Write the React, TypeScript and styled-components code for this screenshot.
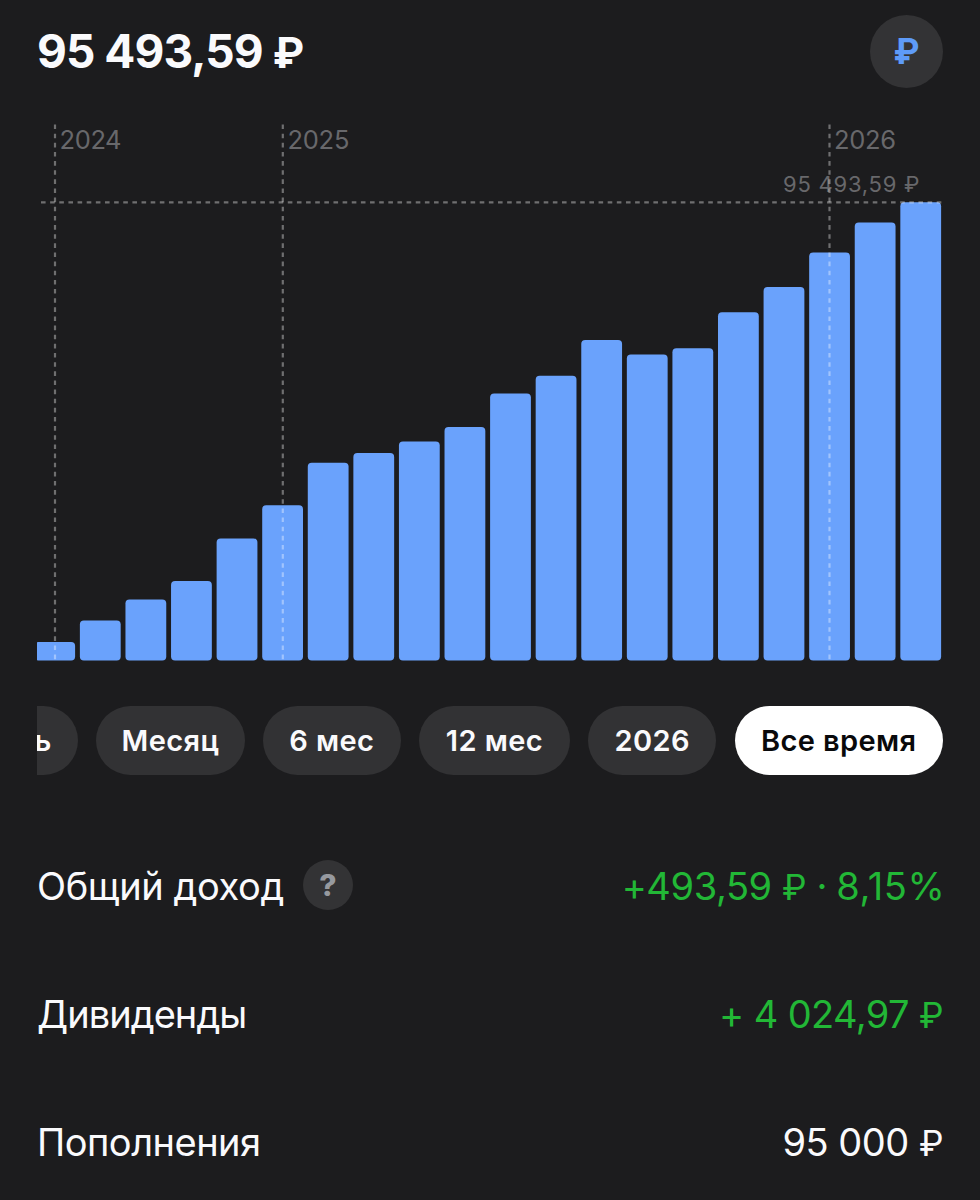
import React from 'react';
import styled, { createGlobalStyle } from 'styled-components';

const GlobalStyle = createGlobalStyle`
  * { box-sizing: border-box; }
  body { margin: 0; background: #1c1c1e; }
`;

const Screen = styled.main`
  display: flex;
  flex-direction: column;
  width: 980px;
  height: 1200px;
  padding: 14px 37px 0;
  overflow: hidden;
  background: #1c1c1e;
  color: #fafafc;
  font-family: Inter, 'Liberation Sans', sans-serif;
`;

const Header = styled.header`
  display: flex;
  flex: none;
  align-items: center;
  justify-content: space-between;
  height: 75px;
`;

const Balance = styled.h1`
  margin: 0;
  font-size: 46px;
  line-height: 57px;
  font-weight: 700;
  letter-spacing: -0.95px;
  white-space: nowrap;
`;

const Ruble = styled.span`
  font-size: 0.92em;
  line-height: 1;
`;

const Percent = styled.span`
  margin: 0 -2.5px 0 -1px;
  letter-spacing: 0.6px;
`;

const CurrencyButton = styled.button`
  display: flex;
  align-items: center;
  justify-content: center;
  width: 73px;
  height: 73px;
  padding: 0 0 1px;
  border: 0;
  border-radius: 50%;
  background: #333335;
  color: #5e9bf8;
  font: 650 35px/44px Inter, sans-serif;
`;

const Chart = styled.svg`
  display: block;
  flex: none;
  width: 907px;
  height: 540px;
  margin-top: 33px;
  font-family: Inter, sans-serif;
`;

const Periods = styled.nav`
  display: flex;
  flex: none;
  justify-content: flex-end;
  gap: 18.2px;
  width: 906px;
  height: 69px;
  margin-top: 44px;
  overflow: hidden;
`;

const Period = styled.button<{ $width: number; $active?: boolean }>`
  display: flex;
  flex: none;
  align-items: center;
  justify-content: center;
  width: ${(p) => p.$width}px;
  height: 69px;
  padding: 0;
  border: 0;
  border-radius: 35px;
  background: ${(p) => (p.$active ? '#ffffff' : '#323234')};
  color: ${(p) => (p.$active ? '#09090b' : '#fafafc')};
  font: 600 29px/37px Inter, sans-serif;
  letter-spacing: 0.4px;
  white-space: nowrap;
`;

const Summary = styled.section`
  display: flex;
  flex: none;
  flex-direction: column;
  margin-top: 46px;
`;

const Row = styled.div`
  display: flex;
  align-items: center;
  justify-content: space-between;
  height: 128px;
  padding-top: 2px;
  font-size: 38px;
  line-height: 48px;
  white-space: nowrap;
`;

const Label = styled.div<{ $spacing: number }>`
  display: flex;
  align-items: center;
  gap: 19px;
  letter-spacing: ${(p) => p.$spacing}px;
`;

const Value = styled.div<{ $positive?: boolean; $spacing: number }>`
  color: ${(p) => (p.$positive ? '#22b736' : '#fafafc')};
  letter-spacing: ${(p) => p.$spacing}px;
`;

const Help = styled.button`
  display: flex;
  align-items: center;
  justify-content: center;
  width: 50px;
  height: 50px;
  margin-top: -2px;
  padding: 0;
  border: 0;
  border-radius: 50%;
  background: #333335;
  color: #96999f;
  font: 800 30px/36px Inter, sans-serif;
`;

const BAR_TOPS = [
  642, 620.5, 599.5, 581, 538.5, 505.2, 462.8, 453, 441.5, 427,
  393.5, 375.7, 340, 354.5, 348.2, 312.3, 287, 252.6, 222.5, 202.3,
];
const BAR_BOTTOM = 660.5;
const BAR_STEP = 45.58;

const YEARS = [
  { x: 55, label: '2024' },
  { x: 282.8, label: '2025' },
  { x: 829.5, label: '2026' },
];

const PERIODS = [
  { label: 'День', width: 130 },
  { label: 'Месяц', width: 149 },
  { label: '6 мес', width: 137.5 },
  { label: '12 мес', width: 151.3 },
  { label: '2026', width: 128 },
  { label: 'Все время', width: 208.5, active: true },
];

function BalanceChart() {
  return (
    <Chart viewBox="37 122 907 540">
      {BAR_TOPS.map((top, i) => (
        <rect
          key={i}
          x={34.3 + i * BAR_STEP}
          y={top}
          width={40.8}
          height={BAR_BOTTOM - top}
          rx={4}
          fill="#6aa2fc"
        />
      ))}
      {YEARS.map(({ x, label }) => (
        <text key={label} x={x + 4.6} y={148.6} fontSize={25.5} fill="#68686b" textLength={62}>
          {label}
        </text>
      ))}
      <text x={783} y={192.3} fontSize={22} fill="#68686b" textLength={136.5}>
        95 493,59 ₽
      </text>
      <g stroke="#fff" strokeOpacity={0.37} strokeWidth={2.2} strokeDasharray="4.6 4.54">
        <line x1={41} y1={202.3} x2={943} y2={202.3} />
        {YEARS.map(({ x }) => (
          <line key={x} x1={x} y1={124.5} x2={x} y2={660.5} />
        ))}
      </g>
    </Chart>
  );
}

export default function App() {
  return (
    <>
      <GlobalStyle />
      <Screen>
        <Header>
          <Balance>
            95 493,59 <Ruble>₽</Ruble>
          </Balance>
          <CurrencyButton>₽</CurrencyButton>
        </Header>
        <BalanceChart />
        <Periods>
          {PERIODS.map(({ label, width, active }) => (
            <Period key={label} $width={width} $active={active}>
              {label}
            </Period>
          ))}
        </Periods>
        <Summary>
          <Row>
            <Label $spacing={-0.4}>
              Общий доход
              <Help>?</Help>
            </Label>
            <Value $positive $spacing={-0.4}>
              +493,59 <Ruble>₽</Ruble> · <Percent>8,15%</Percent>
            </Value>
          </Row>
          <Row>
            <Label $spacing={-0.95}>Дивиденды</Label>
            <Value $positive $spacing={-0.6}>
              + 4 024,97 <Ruble>₽</Ruble>
            </Value>
          </Row>
          <Row>
            <Label $spacing={-0.5}>Пополнения</Label>
            <Value $spacing={-0.5}>
              95 000 <Ruble>₽</Ruble>
            </Value>
          </Row>
        </Summary>
      </Screen>
    </>
  );
}
